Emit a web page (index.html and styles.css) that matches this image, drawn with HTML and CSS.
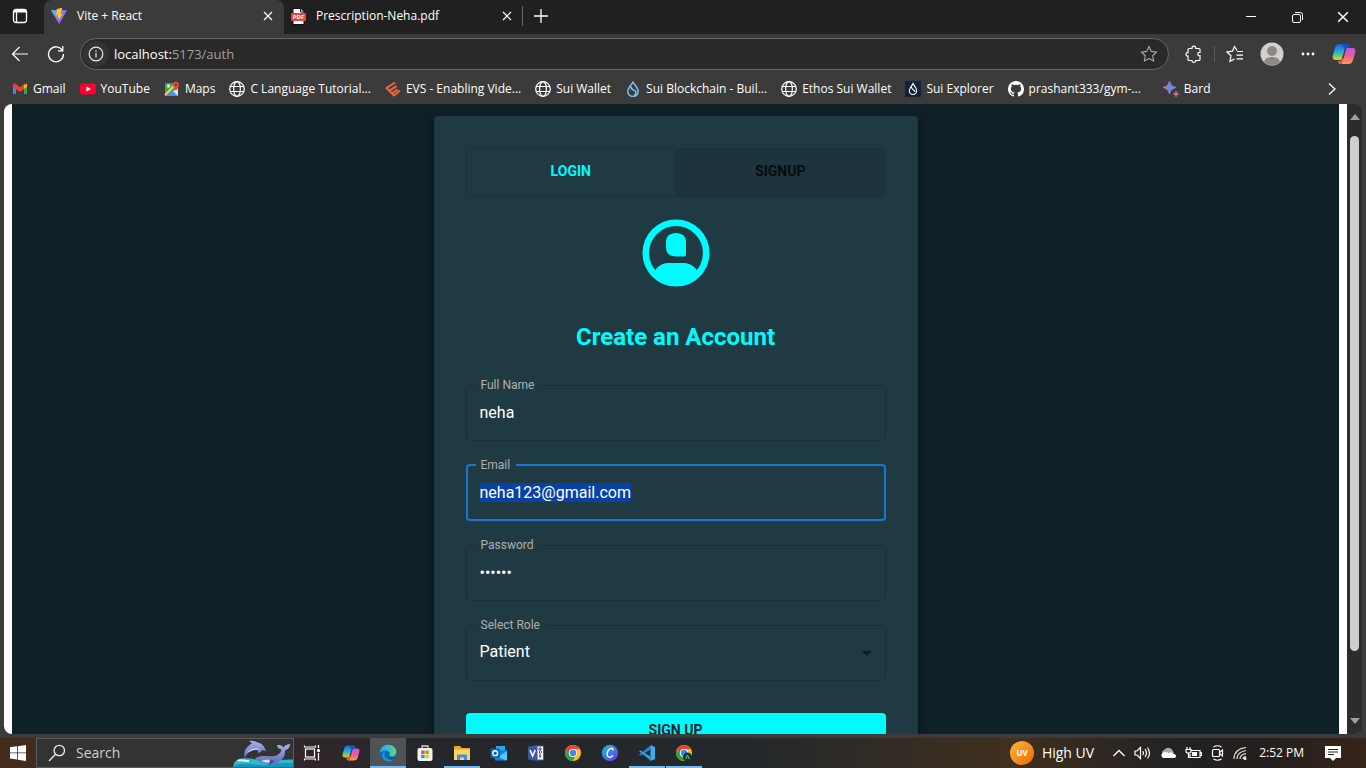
FILE: index.html
```html
<!DOCTYPE html>
<html lang="en">
<head>
<meta charset="utf-8">
<title>Vite + React</title>
<link rel="stylesheet" href="styles.css">
</head>
<body>
<svg width="0" height="0" class="defs" aria-hidden="true">
  <defs>
    <linearGradient id="viteBlue" x1="0" y1="0" x2="1" y2="1"><stop offset="0" stop-color="#41d1ff"/><stop offset=".5" stop-color="#8f70f5"/><stop offset="1" stop-color="#bd34fe"/></linearGradient>
    <linearGradient id="cpA" x1="0" y1="0" x2="0" y2="1"><stop offset="0" stop-color="#1a63dd"/><stop offset=".5" stop-color="#24b0dc"/><stop offset=".8" stop-color="#8ccf4a"/><stop offset="1" stop-color="#f2c51c"/></linearGradient>
    <linearGradient id="cpB" x1="0" y1="0" x2="0" y2="1"><stop offset="0" stop-color="#b35bea"/><stop offset=".5" stop-color="#ee5a96"/><stop offset="1" stop-color="#ff9a4c"/></linearGradient>
    <linearGradient id="bardG"><stop offset="0" stop-color="#d9677c"/><stop offset=".5" stop-color="#7b84e0"/><stop offset="1" stop-color="#4c9cf0"/></linearGradient>
    <linearGradient id="uvG" x1="0" y1="0" x2="1" y2="1"><stop offset="0" stop-color="#f4bd32"/><stop offset="1" stop-color="#f0660d"/></linearGradient>
    <linearGradient id="edgeG" x1="0" y1="0" x2="1" y2="0"><stop offset="0" stop-color="#2aa7e8"/><stop offset=".6" stop-color="#35c3cf"/><stop offset="1" stop-color="#6bd85a"/></linearGradient>
    <linearGradient id="canvaG" x1="0" y1="0" x2="1" y2="1"><stop offset="0" stop-color="#18c4cc"/><stop offset=".5" stop-color="#3d7ce8"/><stop offset="1" stop-color="#7d2ae8"/></linearGradient>
    <linearGradient id="whaleG" x1="0" y1="0" x2="0" y2="1"><stop offset="0" stop-color="#a9b1ea"/><stop offset="1" stop-color="#5f6bb4"/></linearGradient>
    <symbol id="close" viewBox="0 0 10 10"><path d="M1 1l8 8M9 1l-8 8" fill="none" stroke="currentColor" stroke-width="1.2"/></symbol>
    <symbol id="globe" viewBox="0 0 16 16"><g fill="none" stroke="currentColor" stroke-width="1.2"><circle cx="8" cy="8" r="7.3"/><ellipse cx="8" cy="8" rx="3.4" ry="7.3"/><path d="M1.2 5.5h13.6M1.2 10.5h13.6"/></g></symbol>
    <symbol id="copilot" viewBox="0 0 24 24"><path d="M8 2h7c2 0 2.600 1 3.200 3h-2c-2 0-2.700 1-3.200 3l-2 7c-.5 2-1.500 3-3 3H4c-3 0-4-2-3-5l2-7c1-3 2-4 5-4z" fill="url(#cpA)"/><path d="M16 22H9c-2 0-2.600-1-3.200-3h2c2 0 2.700-1 3.200-3l2-7c.5-2 1.500-3 3-3h4c3 0 4 2 3 5l-2 7c-1 3-2 4-5 4z" fill="url(#cpB)"/><path d="M9 2h6c2 0 2.600 1 3.200 3h-2c-2 0-2.700 1-3.200 3z" fill="#1b4fc0"/><path d="M6 19h3l2-3-1 6c-2 0-3-1-4-3z" fill="#e8513e"/><path d="M10 16l2.800-9h1.500l-2.900 9.500z" fill="#3b3b3b"/></symbol>
    <symbol id="chrome" viewBox="0 0 18 18"><circle cx="9" cy="9" r="8" fill="#fbc116"/><path d="M2.070 5A8 8 0 0 1 15.930 5H9a4 4 0 0 0-3.500 6z" fill="#e94335"/><path d="M2.070 5A8 8 0 0 0 8.600 17l3.500-6a4 4 0 0 1-6.600 0z" fill="#2ba24c"/><circle cx="9" cy="9" r="4.100" fill="#fff"/><circle cx="9" cy="9" r="3.200" fill="#4285f4"/></symbol>
  </defs>
</svg>

<header class="chrome">
  <div class="tabstrip">
    <button class="workspace" aria-label="Tab actions"><svg width="16" height="16" viewBox="0 0 16 16" fill="none" stroke="#fff" stroke-width="1.300"><rect x="1.500" y="1.500" width="13" height="13" rx="2.500"/><path d="M4.500 4v10.500"/><path d="M2 3.200h12" stroke-width="2.600"/></svg></button>
    <div class="tab active">
      <svg width="18" height="18" viewBox="0 0 18 18"><path d="M1 3.300L17 3.300 9.200 17.200z" fill="url(#viteBlue)"/><path d="M12.300.8L6.800 2l-.5 6.500 1.800-.4-.6 3 1.600-.4-.4 3.300 3.900-7.300-2 .4z" fill="#ffc824"/></svg>
      <span class="tab-title">Vite + React</span>
      <button aria-label="Close tab"><svg width="10" height="10"><use href="#close"/></svg></button>
    </div>
    <div class="tab">
      <svg width="17" height="17" viewBox="0 0 17 17"><path d="M3 .5h7.500l3.500 3.500v12.500H3z" fill="#fff" stroke="#111"/><path d="M10.500.5V4H14" fill="#ddd" stroke="#111"/><rect x="1" y="5" width="15" height="8" rx="1" fill="#e0474b"/><text x="8.500" y="11.300" text-anchor="middle" class="pdf">PDF</text></svg>
      <span class="tab-title">Prescription-Neha.pdf</span>
      <button aria-label="Close tab"><svg width="10" height="10"><use href="#close"/></svg></button>
    </div>
    <button class="newtab" aria-label="New tab"><svg width="14" height="14" viewBox="0 0 14 14"><path d="M7 0v14M0 7h14" stroke="#fff" stroke-width="1.300"/></svg></button>
    <div class="window-buttons">
      <button aria-label="Minimize"><svg width="10" height="10"><path d="M0 4.500h10" stroke="#fff"/></svg></button>
      <button aria-label="Restore"><svg width="11" height="11" fill="none" stroke="#fff"><rect x=".5" y="2.500" width="8" height="8" rx="1.500"/><path d="M3 .5h5.500a2 2 0 0 1 2 2V8"/></svg></button>
      <button aria-label="Close"><svg width="12" height="12" viewBox="0 0 10 10" color="#fff"><use href="#close"/></svg></button>
    </div>
  </div>

  <div class="toolbar">
    <button aria-label="Back"><svg width="18" height="18" viewBox="0 0 18 18" fill="none" stroke="#fff" stroke-width="1.200"><path d="M17 9H1.500M8.500 2l-7 7 7 7"/></svg></button>
    <button aria-label="Reload"><svg width="18" height="18" viewBox="0 0 18 18" fill="none" stroke="#fff" stroke-width="1.300"><path d="M15.500 5.500A7.500 7.500 0 1 0 16.500 9M15.800 1v4.800H11"/></svg></button>
    <div class="address">
      <span class="info"><svg width="16" height="16" viewBox="0 0 16 16" fill="none" stroke="#eee" stroke-width="1.200"><circle cx="8" cy="8" r="6.800"/><path d="M8 7v4.500M8 4.300v1.400"/></svg></span>
      <span class="url"><b>localhost:</b>5173/auth</span>
      <button aria-label="Favorite"><svg width="18" height="18" viewBox="0 0 18 18" fill="none" stroke="#aaa" stroke-width="1.100"><path d="M9 1.500l2.300 4.900 5.200.7-3.800 3.700.9 5.300L9 13.600l-4.600 2.500.9-5.300L1.500 7.100l5.200-.7z"/></svg></button>
    </div>
    <div class="tools">
      <button aria-label="Extensions"><svg width="18" height="18" viewBox="0 0 18 18" fill="none" stroke="#fff" stroke-width="1.200"><path d="M4 3.500h3c-.3-1.500.8-2.300 1.900-2.300s2.200.8 1.900 2.300H14a1 1 0 0 1 1 1v3c-1.500-.3-2.200.6-2.200 1.600s.7 1.900 2.200 1.600v3.800a1 1 0 0 1-1 1h-3.200c.3 1.200-.8 1.800-1.900 1.800S6.700 16.700 7 15.500H4a1 1 0 0 1-1-1V11C1.600 11.300 1 10.300 1 9.300S1.600 7.400 3 7.700V4.500a1 1 0 0 1 1-1z"/></svg></button>
      <span class="rule"></span>
      <button aria-label="Favorites list"><svg width="18" height="18" viewBox="0 0 18 18" fill="none" stroke="#fff" stroke-width="1.200"><path d="M11 5.500L8.500 1.500 6.500 6.200 1 7l4 3.800L3.900 16.300 8.500 14M11 6.500h6M10.500 10.200H17M10.500 13.800H17"/></svg></button>
      <button aria-label="Profile"><svg width="24" height="24" viewBox="0 0 24 24"><circle cx="12" cy="12" r="11.500" fill="#d2d0ce"/><circle cx="12" cy="9" r="5" fill="#8c8985"/><path d="M4 20c1-4 4-5 8-5s7 1 8 5a11.500 11.500 0 0 1-16 0z" fill="#8c8985"/></svg></button>
      <button aria-label="Menu"><svg width="16" height="4"><g fill="#fff"><circle cx="3" cy="2" r="1.400"/><circle cx="8" cy="2" r="1.400"/><circle cx="13" cy="2" r="1.400"/></g></svg></button>
      <button aria-label="Copilot"><svg width="24" height="24"><use href="#copilot"/></svg></button>
    </div>
  </div>

  <nav class="bookmarks" aria-label="Favorites">
    <a href="#"><svg width="16" height="16" viewBox="0 0 16 16"><path d="M1 3v10h3V6z" fill="#4285f4"/><path d="M15 3v10h-3V6z" fill="#34a853"/><path d="M1 2.500V6l7 5 7-5V2.500L12.500 2.700 8 6.300 3.500 2.700z" fill="#ea4335"/><path d="M12 4v4.100L15 6V3z" fill="#fbbc04"/></svg>Gmail</a>
    <a href="#"><svg width="16" height="16" viewBox="0 0 16 16"><rect y="2.500" width="16" height="11" rx="2.500" fill="#ff0033"/><path d="M6.400 5.500v5L11 8z" fill="#fff"/></svg>YouTube</a>
    <a href="#"><svg width="16" height="16" viewBox="0 0 16 16"><rect x="1" y="2" width="13" height="13" rx="1" fill="#36a852"/><path d="M14 7v8H9L6 12z" fill="#dfe7ee"/><path d="M2 15l6-6 6 6z" fill="#4c8df5"/><path d="M1 14L12 3" stroke="#fbd24b" stroke-width="2"/><circle cx="4.500" cy="5" r="1.700" fill="#e4f3e8"/><path d="M12 10C11 7.500 9 6.500 9 3.800a3 3 0 0 1 6 0C15 6.500 13 7.500 12 10z" fill="#e04a3f"/><circle cx="12" cy="3.800" r="1.100" fill="#8c2119"/></svg>Maps</a>
    <a href="#"><svg width="16" height="16"><use href="#globe"/></svg>C Language Tutorial...</a>
    <a href="#"><svg width="16" height="16" viewBox="0 0 16 16" fill="none" stroke="#f0683a" stroke-width="2"><path d="M1 6.500L9 14.500 15 9.500M1.500 7L10 1.500M4.500 9.700l7-4.600M7.500 12l5-3.500"/></svg>EVS - Enabling Vide...</a>
    <a href="#"><svg width="16" height="16"><use href="#globe"/></svg>Sui Wallet</a>
    <a href="#"><svg width="16" height="16" viewBox="0 0 16 16" fill="none" stroke="#7cbdf0" stroke-width="1.500"><path d="M8 1C6 4.500 2.800 7 2.800 10.300a5.200 5.200 0 0 0 10.400 0C13.200 7 10 4.500 8 1zM6 5.500c-.5 4 4.500 3 5 5.500.2 1.500-.8 2.500-2 3.500"/></svg>Sui Blockchain - Buil...</a>
    <a href="#"><svg width="16" height="16"><use href="#globe"/></svg>Ethos Sui Wallet</a>
    <a href="#"><svg width="16" height="16" viewBox="0 0 16 16"><rect width="16" height="16" fill="#152235"/><path d="M8 2.500C7 5 4.300 6.800 4.300 9.800a3.700 3.700 0 0 0 7.400 0C11.700 6.800 9 5 8 2.500zM6.500 6c0 3 3.500 2.500 3.500 5" fill="none" stroke="#fff" stroke-width="1.100"/></svg>Sui Explorer</a>
    <a href="#"><svg width="16" height="16" viewBox="0 0 16 16"><path fill="#fff" d="M8 0C3.580 0 0 3.580 0 8c0 3.540 2.290 6.530 5.470 7.590.4.070.55-.17.55-.38 0-.19-.01-.82-.01-1.490-2.010.37-2.530-.49-2.690-.94-.09-.23-.48-.94-.82-1.130-.28-.15-.68-.52-.01-.53.63-.01 1.080.58 1.230.82.72 1.210 1.870.87 2.330.66.070-.52.280-.87.510-1.070-1.780-.2-3.640-.89-3.640-3.950 0-.87.310-1.590.82-2.150-.08-.2-.36-1.020.08-2.120 0 0 .67-.21 2.200.82.640-.18 1.320-.27 2-.27s1.360.09 2 .27c1.530-1.040 2.200-.82 2.200-.82.440 1.100.160 1.920.080 2.120.510.560.820 1.270.820 2.150 0 3.070-1.870 3.750-3.650 3.950.290.250.540.730.540 1.480 0 1.070-.010 1.930-.010 2.200 0 .210.150.460.550.380A8 8 0 0 0 16 8c0-4.420-3.580-8-8-8z"/></svg>prashant333/gym-...</a>
    <a href="#" class="bard"><svg width="16" height="16" viewBox="0 0 16 16"><path d="M6.500 0c1 4 2.500 5.500 6.500 6.500-4 1-5.500 2.500-6.500 6.500C5.500 9 4 7.500 0 6.500c4-1 5.500-2.500 6.500-6.500z" fill="url(#bardG)" stroke="url(#bardG)"/><path d="M13 10c.5 2 1 2.500 3 3-2 .5-2.500 1-3 3-.5-2-1-2.500-3-3 2-.5 2.500-1 3-3z" fill="#d96a88" stroke="#d96a88" stroke-width=".6"/></svg>Bard</a>
    <button class="more" aria-label="More favorites"><svg width="8" height="12" fill="none" stroke="#fff" stroke-width="1.300"><path d="M1 .5L7 6l-6 5.500"/></svg></button>
  </nav>
</header>

<div class="viewport">
  <main class="page">
    <div class="backdrop">
      <form class="card">
        <div class="switch">
          <button type="button">LOGIN</button>
          <button type="button" class="selected">SIGNUP</button>
        </div>
        <svg class="avatar" width="80" height="80" viewBox="0 0 80 80"><circle cx="40" cy="40" r="30.200" fill="none" stroke="#00fbff" stroke-width="6.600"/><path d="M40 20c6.500 0 10 3.500 10 9v12.500a2 2 0 0 1-2 2h-8c-6.500 0-10-3.500-10-9V29c0-5.500 3.500-9 10-9z" fill="#00fbff"/><path d="M19 57.500C22 52.500 27 50 33 50h14c6 0 11 2.500 14 7.500L55 67a30 30 0 0 1-30 0z" fill="#00fbff"/></svg>
        <h1>Create an Account</h1>
        <fieldset><legend><label for="name">Full Name</label></legend><input id="name" type="text" value="neha"></fieldset>
        <fieldset class="focused"><legend><label for="email">Email</label></legend><input id="email" type="text" value="neha123@gmail.com"></fieldset>
        <fieldset><legend><label for="password">Password</label></legend><input id="password" type="password" value="secret"></fieldset>
        <fieldset class="dropdown"><legend><label for="role">Select Role</label></legend><select id="role"><option>Patient</option><option>Doctor</option></select><svg width="10" height="5"><path d="M0 0h10L5 5z" fill="#0e1c22"/></svg></fieldset>
        <button type="submit" class="submit">SIGN UP</button>
      </form>
    </div>
  </main>
  <div class="scrollbar"><svg width="10" height="6"><path d="M0 6h10L5 0z" fill="#a0a0a0"/></svg><div class="track"><div class="thumb"></div></div><svg width="10" height="6"><path d="M0 0h10L5 6z" fill="#a0a0a0"/></svg></div>
</div>

<footer class="taskbar">
  <button class="start" aria-label="Start"><svg width="16" height="16" viewBox="0 0 16 16" fill="#fff"><path d="M0 2.300L7 1.300v6.200H0zM7.800 1.200L16 0v7.500H7.800zM0 8.300h7v6.300l-7-1zM7.800 8.300H16V16l-8.200-1.200z"/></svg></button>
  <label class="search"><svg width="18" height="18" viewBox="0 0 18 18" fill="none" stroke="#eee" stroke-width="1.300"><circle cx="11.300" cy="6.500" r="5.200"/><path d="M7.500 10.300L1 17"/></svg><input type="text" placeholder="Search" aria-label="Search"><svg class="dolphins" width="60" height="27" viewBox="0 0 60 27"><path d="M0 27C1 22 3 19 9 18.500c10-1 18 3 28 2 9 0 15-1.500 23-1V27z" fill="#2fb9cf"/><path d="M2 25c10-3 22 1 32 0 10-2 17-2 26-2v4H1z" fill="#1b94b8"/><path d="M5 21c2-2 6 0 11 0" stroke="#d5f8fb" stroke-width="2" fill="none"/><path d="M11.500 18.500C10.500 11 13 6.500 19 3.500L16 .8C19 .3 22 1 24 2.200 28.500 3 31.500 6 33 11L28.500 10C29 12 27 13 24.500 12.500L25 10C22 9 20 9.500 17.500 11c-3 2-5 4.500-6 7.500z" fill="url(#whaleG)"/><path d="M14 13c3-4 8-5.500 13-3.500-4-.5-8 .5-13 3.500z" fill="#d5daf8"/><path d="M22 18.500c6-4.500 14-1.500 20-2.500 4-1 6-4 6.500-6.500-2.500-.5-4.500-2-4.500-4.500 3 0 5.500.5 6.500 2.500C52 5 54 4.500 57 4c0 4-2.500 5.500-5 6.500.5 6-3.500 11.500-10 13-8 1-16-.5-20-5z" fill="url(#whaleG)"/><path d="M28 21c5-2 8-1 14-1-3 3-8 4-14 1z" fill="#d5daf8"/><path d="M37 19.500l-1 6 6-5z" fill="#424b95"/></svg></label>
  <div class="apps">
    <button aria-label="Task view"><svg width="18" height="18" viewBox="0 0 18 18" fill="none" stroke="#fff" stroke-width="1.200"><rect x="2.500" y="5" width="9" height="8"/><path d="M1.500 1.500V3h11V1.500M1.500 16.500V15h11v1.500M15.500 1v3M15.500 9v7.500"/><circle cx="15.500" cy="6.500" r="1" fill="#fff"/></svg></button>
    <button aria-label="Copilot"><svg width="18" height="18"><use href="#copilot"/></svg></button>
    <button class="open current" aria-label="Edge"><svg width="18" height="18" viewBox="0 0 18 18"><circle cx="9" cy="9" r="8.300" fill="#1267b5"/><path d="M.8 9C1 3.500 4.500.7 9 .7c5 0 8.300 3.500 8.300 7.200 0 3-2 4.600-4.700 4.600-2 0-2.700-.8-2.200-1.700 1-2-1-4.300-3.700-4.300C3.500 6.500 1.500 8 .8 9z" fill="url(#edgeG)"/><path d="M7.500 7C5 8 4.800 12 7.500 14.500c2.500 2 6 1.300 8.500-.5-2 3-6.500 4.500-10 2.500C2 14 2 8 7.500 7z" fill="#2090d8"/><path d="M10.400 11.500c-1 .8.500 2.500 2.800 2.500 1.300 0 2.500-.5 3.400-1.300-.3 1-1.300 2-2.300 2.500-3 .5-6-1.700-3.900-3.700z" fill="#184a82"/></svg></button>
    <button aria-label="Store"><svg width="18" height="18" viewBox="0 0 18 18"><path d="M6 4V2h6v2" fill="none" stroke="#cfd6dc" stroke-width="1.300"/><rect x="1.500" y="4" width="15" height="13" rx="2" fill="#f4f4f4"/><path d="M5.200 6.500h3.400V10H5.200z" fill="#f25022"/><path d="M9.400 6.500h3.400V10H9.400z" fill="#7fba00"/><path d="M5.200 10.800h3.400v3.400H5.200z" fill="#00a4ef"/><path d="M9.400 10.800h3.400v3.400H9.400z" fill="#ffb900"/></svg></button>
    <button class="open" aria-label="File Explorer"><svg width="18" height="18" viewBox="0 0 18 18"><path d="M1 2h6l2 2h8v4H1z" fill="#e8a71e"/><path d="M1 5.500h16V16H1z" fill="#ffd566"/><path d="M4 16v-5.500h10V16h-3v-2.500H7V16z" fill="#3c93dc"/></svg></button>
    <button aria-label="Outlook"><svg width="18" height="18" viewBox="0 0 18 18"><path d="M6 2h9v6H6z" fill="#28a8ea"/><path d="M4 7l13-1v9a1.500 1.500 0 0 1-1.500 1.500H5z" fill="#1683d6"/><path d="M17 7l-9 6 8 3.500 1-.5z" fill="#50c8f4"/><rect x=".5" y="4.500" width="9.500" height="9.500" rx="1" fill="#0b64bd"/><circle cx="5.200" cy="9.200" r="2.400" fill="none" stroke="#fff" stroke-width="1.400"/></svg></button>
    <button aria-label="Visio"><svg width="18" height="18" viewBox="0 0 18 18"><path d="M9 2h7.500v14H9z" fill="#fff" stroke="#4458a8"/><path d="M12 4h2v2h-2zM12 8l1.500-1.500L15 8l-1.500 1.500zM12 12h2.500M13 9v5" fill="none" stroke="#3c50a0"/><path d="M1 2.500L10.500 1v16L1 15.500z" fill="#3955a3"/><path d="M3 6l2.600 6L8.200 6" fill="none" stroke="#fff" stroke-width="1.600"/></svg></button>
    <button aria-label="Chrome"><svg width="18" height="18"><use href="#chrome"/></svg></button>
    <button aria-label="Canva"><svg width="18" height="18" viewBox="0 0 18 18"><circle cx="9" cy="9" r="8.200" fill="url(#canvaG)"/><path d="M11.800 6.500c.6-1.500-.4-2.500-1.800-2.200C7.500 5 5.800 8 6.200 11c.4 3 3.500 3 5.800.5" fill="none" stroke="#fff" stroke-width="1.400"/></svg></button>
    <button class="open" aria-label="Code"><svg width="18" height="18" viewBox="0 0 18 18"><path d="M1 10.700L12.500 1.500v4L2.300 11.800z" fill="#1f8ad2"/><path d="M1 7.300l1.300-1.100L12.500 12.500v4z" fill="#2a9fe6"/><path d="M12.500 1l4.500 2v12l-4.500 2z" fill="#3aaef2"/></svg></button>
    <button class="open" aria-label="Chrome profile"><svg width="18" height="18"><use href="#chrome"/><circle cx="12.500" cy="13" r="4.500" fill="#0c3b36"/><path d="M10.800 15l1.700-4 1.700 4" fill="none" stroke="#8fb5a8"/></svg></button>
  </div>
  <div class="tray">
    <span class="weather"><svg width="24" height="24"><circle cx="12" cy="12" r="12" fill="url(#uvG)"/><text x="12" y="15" text-anchor="middle" class="uv">UV</text></svg>High UV</span>
    <svg width="12" height="8" fill="none" stroke="#fff" stroke-width="1.300"><path d="M.5 7L6 1.500 11.500 7"/></svg>
    <svg width="17" height="14" viewBox="0 0 17 14" fill="none" stroke="#fff" stroke-width="1.200"><path d="M1 5v4h2l3.500 3.500v-11L3 5zM8.700 5q1.500 2 0 4M11 3.200q3 3.800 0 7.600M13.500 1.500q4 5.500 0 11"/></svg>
    <svg width="16" height="12"><path d="M3 8a3 3 0 0 1 1-5 5 5 0 0 1 8-.5L14 6l-6 4z" fill="#a9a9a9"/><path d="M3 11a3 3 0 0 1 .5-5.500c2-1 3.500-.5 5 .7 1-.8 3.500-1 4.500.3 2.500.3 3 2 3 2.500 0 1.500-1 2-2 2z" fill="#fff"/></svg>
    <svg width="17" height="14" viewBox="0 0 17 14" fill="none" stroke="#fff" stroke-width="1.200"><path d="M6 4.500h9v7H5V8M15 6.500h1.500v3H15M1 3.500h5v2Q6 7 3.500 7 1 7 1 5.500zM2 3.500V1M5 3.500V1M3.500 7v4.500H6"/><path d="M7.500 6.500h4v3h-4z" fill="#fff"/></svg>
    <svg width="13" height="16" viewBox="0 0 13 16" fill="none" stroke="#fff" stroke-width="1.200"><rect x="1.500" y="4.500" width="7" height="7" rx="1"/><path d="M8.500 7.500L11.500 5v6l-3-2.500M2.500 2Q6.500-.5 10.500 2M2.500 14q4 2.500 8 0"/></svg>
    <svg width="14" height="14" viewBox="0 0 14 14" fill="none" stroke="#ddd" stroke-width="1.200"><path d="M1 13Q1 3 13 1.500M4 13Q4 6 13 4.500M7 13q0-4.500 6-5.300M10 13q0-2 3-2.300"/><circle cx="12" cy="12.500" r="1" fill="#fff"/></svg>
    <time>2:52 PM</time>
    <svg class="note" width="16" height="16"><path d="M0 1h16v12h-5l-3 3-3-3H0z" fill="#fff"/><path d="M3 4.500h10M3 7h10M3 9.500h6" stroke="#222"/></svg>
  </div>
</footer>
<script src="script.js"></script>
</body>
</html>
```
FILE: styles.css
```css
* { box-sizing: border-box; }
body {
  margin: 0;
  height: 100vh;
  display: flex;
  flex-direction: column;
  overflow: hidden;
  background: #3b3b3b;
  color: #fff;
  font: 12px/16px "Open Sans", "Noto Sans", sans-serif;
}
.defs { position: absolute; }
svg { display: block; flex: none; }
button, input, select { font: inherit; color: inherit; border: 0; padding: 0; background: none; outline: none; }
button { display: flex; align-items: center; justify-content: center; }
a { color: inherit; text-decoration: none; }

/* Browser frame */
.tabstrip { display: flex; height: 34px; background: #202020; align-items: stretch; }
.workspace { width: 40px; padding-bottom: 2px; }
.tab { display: flex; align-items: center; gap: 9px; width: 238px; padding: 0 10px 2px 6px; }
.tab.active { background: #3b3b3b; width: 240px; margin-left: 4px; padding-right: 11px; border-radius: 8px 8px 0 0; }
.tab-title { flex: 1; }
.tab button { color: #fff; }
.newtab { width: 36px; height: 20px; margin-top: 6px; border-left: 1px solid #666; }
.pdf { font: 700 6px "Open Sans", sans-serif; fill: #fff; }
.window-buttons { display: flex; margin-left: auto; }
.window-buttons button { width: 46px; }

.toolbar { display: flex; align-items: center; height: 40px; padding: 0 10px; }
.toolbar > button { width: 20px; margin-right: 16px; }
.address {
  flex: 1;
  display: flex;
  align-items: center;
  height: 32px;
  margin-left: -2px;
  padding: 0 10px 0 2px;
  border: 1px solid #666;
  border-radius: 16px;
  background: #292929;
}
.info { display: grid; place-items: center; width: 26px; height: 26px; border-radius: 13px; background: #333; }
.url { flex: 1; margin-left: 5px; font-size: 13px; line-height: 20px; color: #a0a0a0; }
.url b { font-weight: 400; color: #fff; }
.tools { display: flex; align-items: center; gap: 11px; margin-left: 16px; }
.tools .rule { width: 1px; height: 16px; background: #5c5c5c; }
.tools button:nth-child(n+4) { margin-left: 5px; }

.bookmarks { display: flex; align-items: center; gap: 14px; height: 30px; padding: 0 30px 0 12px; white-space: nowrap; }
.bookmarks a { display: flex; align-items: center; gap: 5px; }
.bookmarks .bard { margin-left: 8px; }
.bookmarks .more { margin-left: auto; }

/* Page area */
.viewport { flex: 1; min-height: 0; display: flex; margin: 0 4px 4px; border-radius: 8px; overflow: hidden; }
.page { flex: 1; background: #fff; padding: 0 8px; overflow: hidden; }
.backdrop { display: flex; justify-content: center; align-items: flex-start; min-height: 100%; padding-top: 12px; background: #0f2027; }
.card {
  display: flex;
  flex-direction: column;
  width: 484px;
  padding: 32px;
  border-radius: 4px;
  background: #203a43;
  box-shadow: 0 2px 10px rgba(0, 0, 0, .4);
  font: 16px/24px Roboto, sans-serif;
}
.switch { display: flex; height: 49px; border: 1px solid #1b323b; border-radius: 4px; overflow: hidden; }
.switch button { flex: 1; font-size: 14px; font-weight: 700; color: #00fbff; padding-bottom: 4px; }
.switch .selected { background: #1d343e; color: #050c0f; border-left: 1px solid #1b323b; }
.avatar { margin: 16px auto 0; }
h1 { margin: 28px 0 25px; font-size: 24px; line-height: 32px; text-align: center; color: #00fbff; }
fieldset {
  min-width: 0;
  margin: 0 0 17px;
  padding: 0 13px;
  height: 63px;
  border: 1px solid #1a3039;
  border-radius: 4px;
}
.focused { border: 2px solid #1976d2; padding: 0 12px; }
legend { margin-left: -4px; padding: 0 6px 0 5px; font-size: 12px; line-height: 14px; color: #b0b0b0; }
legend label { display: block; }
fieldset input, fieldset select { display: block; width: 100%; height: 40px; }
input::selection { background: #0842a8; color: #fff; }
select { appearance: none; }
.dropdown { position: relative; }
.dropdown svg { position: absolute; right: 13px; top: 19px; pointer-events: none; }
.submit { height: 37px; margin-top: 15px; padding-bottom: 3px; border-radius: 4px; background: #00fbff; color: #0f2027; font-size: 14px; font-weight: 700; }

.scrollbar { display: flex; flex-direction: column; align-items: center; justify-content: space-between; width: 15px; padding: 10px 0; background: #2c2c2c; }
.track { flex: 1; width: 9px; margin: 16px 0 28px; }
.thumb { height: 93%; border-radius: 5px; background: #cdcdcd; }

/* Taskbar */
.taskbar {
  display: flex;
  height: 30px;
  background: linear-gradient(90deg, #432c1e, #31262a 22%, #25262b 30%, #24282b 55%, #40301f 74%, #222222 86%, #241f1d 93%, #37241a);
}
.start { width: 36px; }
.search { display: flex; align-items: center; width: 258px; padding-left: 11px; border: 1px solid #5c5c5c; background: #333; }
.search input { flex: 1; min-width: 0; margin-left: 10px; font-size: 14px; }
.search input::placeholder { color: #d0d0d0; }
.dolphins { align-self: flex-end; }
.apps { display: flex; gap: 1px; }
.apps button { width: 36px; }
.apps button:first-child { margin-right: 2px; }
.apps .open { box-shadow: inset 0 -2px #76b9ed; }
.apps .current { background: #505355; }
.tray { display: flex; align-items: center; gap: 9px; margin-left: auto; padding-right: 25px; }
.weather { display: flex; align-items: center; gap: 8px; margin-right: 10px; font-size: 14px; }
.uv { font: 700 8px "Open Sans", sans-serif; fill: #fff; }
.tray time { margin: 0 12px 0 3px; }
```
FILE: script.js
```js
const email = document.getElementById("email");
email.focus();
email.select();
```
